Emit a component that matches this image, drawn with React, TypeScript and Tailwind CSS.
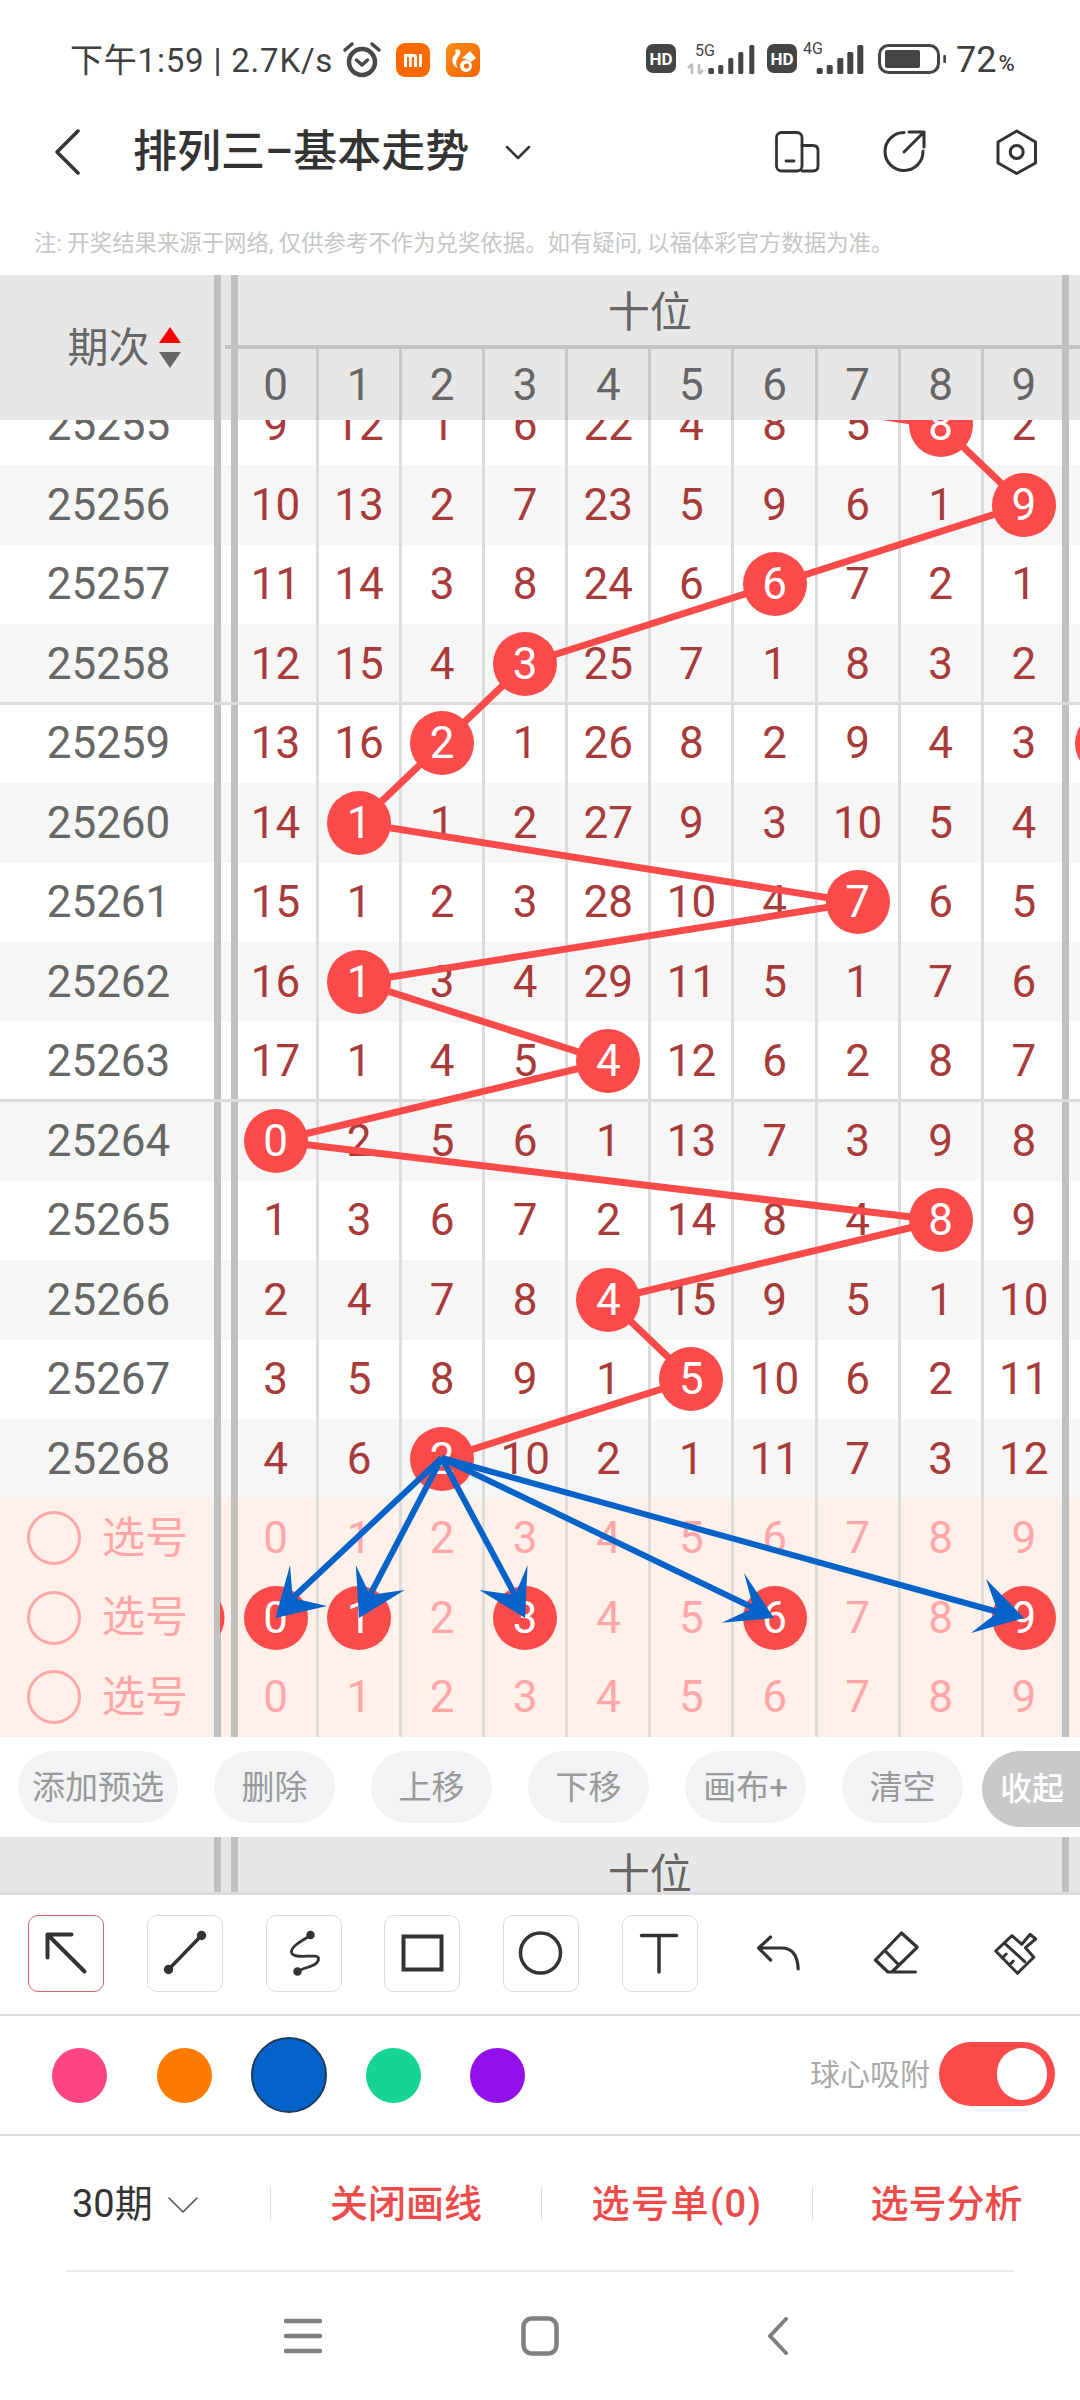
import React from "react";

const COLS = "grid grid-cols-[214px_7px_10px_7px_81px_repeat(8,83.1px)_78px_7px_1fr]";
const DIGITS = [0, 1, 2, 3, 4, 5, 6, 7, 8, 9];
const HEAD_CELLS = [
  "col-start-5 border-r-[3px] border-[#c8c8c8] pr-[3px]",
  "col-start-6 border-r-[3px] border-[#c8c8c8]",
  "col-start-7 border-r-[3px] border-[#c8c8c8]",
  "col-start-8 border-r-[3px] border-[#c8c8c8]",
  "col-start-9 border-r-[3px] border-[#c8c8c8]",
  "col-start-10 border-r-[3px] border-[#c8c8c8]",
  "col-start-11 border-r-[3px] border-[#c8c8c8]",
  "col-start-12 border-r-[3px] border-[#c8c8c8]",
  "col-start-13 border-r-[3px] border-[#c8c8c8]",
  "col-start-14 pl-[2px]",
];

type Cell = number | { b: number };
const b = (n: number) => ({ b: n });

const rows: { id: number; cells: Cell[] }[] = [
  { id: 25255, cells: [9, 12, 1, 6, 22, 4, 8, 5, b(8), 2] },
  { id: 25256, cells: [10, 13, 2, 7, 23, 5, 9, 6, 1, b(9)] },
  { id: 25257, cells: [11, 14, 3, 8, 24, 6, b(6), 7, 2, 1] },
  { id: 25258, cells: [12, 15, 4, b(3), 25, 7, 1, 8, 3, 2] },
  { id: 25259, cells: [13, 16, b(2), 1, 26, 8, 2, 9, 4, 3] },
  { id: 25260, cells: [14, b(1), 1, 2, 27, 9, 3, 10, 5, 4] },
  { id: 25261, cells: [15, 1, 2, 3, 28, 10, 4, b(7), 6, 5] },
  { id: 25262, cells: [16, b(1), 3, 4, 29, 11, 5, 1, 7, 6] },
  { id: 25263, cells: [17, 1, 4, 5, b(4), 12, 6, 2, 8, 7] },
  { id: 25264, cells: [b(0), 2, 5, 6, 1, 13, 7, 3, 9, 8] },
  { id: 25265, cells: [1, 3, 6, 7, 2, 14, 8, 4, b(8), 9] },
  { id: 25266, cells: [2, 4, 7, 8, b(4), 15, 9, 5, 1, 10] },
  { id: 25267, cells: [3, 5, 8, 9, 1, b(5), 10, 6, 2, 11] },
  { id: 25268, cells: [4, 6, b(2), 10, 2, 1, 11, 7, 3, 12] },
];

const cx = (i: number) => (i === 0 ? 275.5 : i === 9 ? 1023.8 : 319 + 83.1 * (i - 1) + 40.05);
const cy = (r: number) => 425.5 + 79.5 * r;

const drawn = [8, 9, 6, 3, 2, 1, 7, 1, 4, 0, 8, 4, 5, 2];

function Ball({ n }: { n: number }) {
  return (
    <span className="relative z-20 flex h-[64px] w-[64px] shrink-0 items-center justify-center rounded-full bg-[#fa4a4a] text-white">
      {n}
    </span>
  );
}

function Cells({ cells, color }: { cells: Cell[]; color: string }) {
  return (
    <>
      {cells.map((c, i) => (
        <div
          key={i}
          className={
            "flex items-center justify-center " +
            color +
            (i === 0 ? " border-r-[3px] border-[#dcdcdc] pr-[3px]" : i === 9 ? " pl-[2px]" : " border-r-[3px] border-[#dcdcdc]")
          }
        >
          {typeof c === "number" ? c : <Ball n={c.b} />}
        </div>
      ))}
    </>
  );
}

function Row({ id, cells, idx }: { id: number; cells: Cell[]; idx: number }) {
  const line = id === 25259 || id === 25264;
  return (
    <div className={COLS + " relative h-[79.5px] text-[44px] leading-none " + (idx % 2 === 1 ? "bg-[#f6f6f6]" : "bg-white")}>
      {line && <div className="absolute inset-x-0 top-[-2px] h-[3px] bg-[#dcdcdc]" />}
      <div className="flex items-center justify-center pl-[3px] text-[#666666]">{id}</div>
      <div className="bg-[#c0c0c0]" />
      <div />
      <div className="bg-[#c0c0c0]" />
      <Cells cells={cells} color="text-[#a83a3a]" />
      <div className="bg-[#c0c0c0]" />
      <div />
    </div>
  );
}

function SelectRow({ cells }: { cells: Cell[] }) {
  return (
    <div className={COLS + " h-[79.5px] bg-[#fff0ea] text-[44px] leading-none"}>
      <div className="flex items-center pl-[27px] text-[#ffa6a6]">
        <span className="h-[54px] w-[54px] rounded-full border-[3.5px] border-[#ffa6a6]" />
        <span className="ml-[21px] text-[43px]">选号</span>
      </div>
      <div className="bg-[#c0c0c0]" />
      <div />
      <div className="bg-[#c0c0c0]" />
      <Cells cells={cells} color="text-[#ffa6a6]" />
      <div className="bg-[#c0c0c0]" />
      <div />
    </div>
  );
}

function Header({ label = true }: { label?: boolean }) {
  return (
    <div className={COLS + " h-[145px] grid-rows-[70px_4px_71px] bg-[#e7e7e7] text-[#666666]"}>
      <div className="col-start-1 row-span-3 row-start-1 flex items-center justify-center pl-[34px] pt-[1px]">
        {label && <span className="text-[41px] leading-none">期次</span>}
        {label && (
          <svg width="22" height="42" viewBox="0 0 22 42" className="ml-[9px]">
            <path d="M11 0 L22 16 H0 Z" fill="#ff0000" />
            <path d="M0 25 H22 L11 41 Z" fill="#666666" />
          </svg>
        )}
      </div>
      <div className="col-start-2 row-span-3 row-start-1 bg-[#c0c0c0]" />
      <div className="col-start-3 row-start-2 ml-[4px] bg-[#c2c2c2]" />
      <div className="col-start-4 row-span-3 row-start-1 bg-[#c0c0c0]" />
      <div className="col-span-10 col-start-5 row-start-1 flex items-center justify-center pt-[5px] text-[42px] leading-none">十位</div>
      <div className="col-span-10 col-start-5 row-start-2 bg-[#c2c2c2]" />
      {DIGITS.map((d) => (
        <div key={d} className={"row-start-3 flex items-center justify-center text-[44px] leading-none " + HEAD_CELLS[d]}>
          {d}
        </div>
      ))}
      <div className="col-start-15 row-span-3 row-start-1 bg-[#c0c0c0]" />
      <div className="col-start-16 row-start-2 bg-[#c2c2c2]" />
    </div>
  );
}

function Arrow({ tip, b1, notch, b2 }: { tip: number[]; b1: number[]; notch: number[]; b2: number[] }) {
  return (
    <g>
      <line x1={441.7} y1={1458} x2={notch[0]} y2={notch[1]} stroke="#0463c9" strokeWidth="6" />
      <polygon points={`${tip[0]},${tip[1]} ${b1[0]},${b1[1]} ${notch[0]},${notch[1]} ${b2[0]},${b2[1]}`} fill="#0463c9" />
    </g>
  );
}

function Overlays() {
  const pts = drawn.map((c, r) => `${cx(c)},${cy(r)}`).join(" ");
  return (
    <>
      <svg width="1080" height="1317" viewBox="0 420 1080 1317" className="absolute left-0 top-0 z-10">
        <defs>
          <clipPath id="lb">
            <rect x="220" y="1560" width="10" height="120" />
          </clipPath>
        </defs>
        <line x1="700" y1="388.5" x2={cx(8)} y2={cy(0)} stroke="#fa4a4a" strokeWidth="7" />
        <polyline points={pts} fill="none" stroke="#fa4a4a" strokeWidth="7" />
        <circle cx="1107" cy={cy(4)} r="32" fill="#fa4a4a" />
        <circle cx="192.5" cy="1618" r="32" fill="#fa4a4a" clipPath="url(#lb)" />
      </svg>
      <svg width="1080" height="1317" viewBox="0 420 1080 1317" className="pointer-events-none absolute left-0 top-0 z-30">
        <Arrow tip={[275.5, 1618]} b1={[290, 1565]} notch={[292.7, 1598]} b2={[327, 1606]} />
        <Arrow tip={[359, 1618]} b1={[355.8, 1565]} notch={[370, 1595]} b2={[404.7, 1590]} />
        <Arrow tip={[525, 1618]} b1={[527.6, 1565]} notch={[515, 1595]} b2={[479.4, 1590]} />
        <Arrow tip={[774, 1618]} b1={[744, 1573]} notch={[753.5, 1608]} b2={[721.5, 1622.7]} />
        <Arrow tip={[1024, 1618]} b1={[986, 1579]} notch={[998, 1612]} b2={[971, 1633]} />
      </svg>
    </>
  );
}

function StatusRight() {
  const bars1 = [
    [708.3, 68, 5.7],
    [718.3, 65, 5],
    [728.3, 58, 5],
    [738.3, 52, 5],
    [749.3, 45, 5],
  ];
  const bars2 = [
    [816.7, 68, 6],
    [826.7, 65, 6],
    [837.3, 58, 6],
    [847.3, 52, 6],
    [857.3, 45, 6],
  ];
  return (
    <svg width="302" height="40" viewBox="646 40 302 40" className="ml-[166px] shrink-0">
      <rect x="646" y="44" width="30" height="29" rx="7" fill="#444444" />
      <text x="661" y="64.5" textAnchor="middle" fontSize="17" fontWeight="700" fill="#fff" fontFamily="Roboto">HD</text>
      <text x="695" y="56" fontSize="16" fill="#444444" fontFamily="Roboto">5G</text>
      <path d="M692 64 V74 M688 68 L692 64 M699 74 V64 M699 74 L703 70" stroke="#bdbdbd" strokeWidth="2.5" fill="none" />
      {bars1.map((a, i) => (
        <rect key={i} x={a[0]} y={a[1]} width={a[2]} height={74 - a[1]} rx="1.5" fill="#444444" />
      ))}
      <rect x="767" y="44" width="30" height="29" rx="7" fill="#444444" />
      <text x="782" y="64.5" textAnchor="middle" fontSize="17" fontWeight="700" fill="#fff" fontFamily="Roboto">HD</text>
      <text x="803" y="54" fontSize="16" fill="#444444" fontFamily="Roboto">4G</text>
      {bars2.map((a, i) => (
        <rect key={i} x={a[0]} y={a[1]} width={a[2]} height={74 - a[1]} rx="1.5" fill="#444444" />
      ))}
      <rect x="879.5" y="45.5" width="59" height="27" rx="9" fill="none" stroke="#444444" strokeWidth="3" />
      <rect x="885" y="50" width="35" height="18" rx="2" fill="#444444" />
      <rect x="943.3" y="55" width="2.7" height="8" rx="1" fill="#444444" />
    </svg>
  );
}

function Tool({ children, active }: { children?: React.ReactNode; active?: boolean }) {
  return (
    <div className={"h-[77px] w-[76px] shrink-0 rounded-[10px] border-[1.5px] " + (active ? "border-[#d96464]" : "border-[#dcdcdc]")}>
      <svg width="73" height="74" viewBox="1.5 1.5 73 74" fill="none" stroke="#333333" strokeWidth="3.5" strokeLinecap="round" strokeLinejoin="round">
        {children}
      </svg>
    </div>
  );
}

function ActionBtn({ label, wide }: { label: string; wide?: boolean }) {
  return (
    <div className={"flex h-[72px] shrink-0 items-center justify-center rounded-full bg-[#f2f3f5] text-[33px] leading-none text-[#999999] " + (wide ? "w-[160px]" : "w-[121px]")}>
      {label}
    </div>
  );
}

export default function App() {
  return (
    <div className="h-[2400px] w-[1080px] overflow-hidden bg-white font-['Roboto','Noto_Sans_CJK_SC',sans-serif]">
      {/* status bar */}
      <div className="flex h-[120px] items-center pl-[70px]">
        <span className="w-[264px] shrink-0 whitespace-nowrap text-[33px] leading-none tracking-[0.8px] text-[#404040]">下午1:59 | 2.7K/s</span>
        <svg width="40" height="38" viewBox="0 0 40 38" className="ml-[8px] shrink-0" fill="none" stroke="#484848" strokeLinecap="round" strokeLinejoin="round">
          <circle cx="20" cy="21" r="13" strokeWidth="4.5" />
          <path d="M14.5 19 L20 24 L25.5 19" strokeWidth="3.5" />
          <path d="M3 9 L10 3 M37 9 L30 3" strokeWidth="3.5" />
        </svg>
        <svg width="34" height="34" viewBox="0 0 34 34" className="ml-[14px] shrink-0">
          <rect width="34" height="34" rx="9" fill="#ff6a00" />
          <path d="M8 11 H18 Q21 11 21 14 V24 H18 V14 H15.8 V24 H13 V14 H11 V24 H8 Z" fill="#fff" />
          <rect x="23" y="11" width="3" height="13" fill="#fff" />
        </svg>
        <svg width="34" height="34" viewBox="0 0 34 34" className="ml-[16px] shrink-0">
          <defs>
            <linearGradient id="uc" x1="0" y1="0" x2="1" y2="1">
              <stop offset="0" stopColor="#ff8a1a" />
              <stop offset="1" stopColor="#f76400" />
            </linearGradient>
          </defs>
          <rect width="34" height="34" rx="8" fill="url(#uc)" />
          <path d="M9 7 C14 5 16 9 13 13 C10 17 9 21 12 25 C8 24 5 19 7 14 C8 12 11 11 9 7 Z" fill="#fff" />
          <path d="M16 15 L24 8 L30 15 L25 19 C22 16 19 16 16 15 Z" fill="#fff" />
          <circle cx="20" cy="23" r="6" fill="#fff" />
          <circle cx="20.5" cy="23" r="2.5" fill="#f76400" />
        </svg>
        <StatusRight />
        <span className="ml-[8px] text-[36px] leading-none text-[#404040]">72</span>
        <span className="ml-[2px] mt-[8px] text-[22px] font-medium leading-none text-[#404040]">%</span>
      </div>

      {/* title bar */}
      <div className="flex h-[64px] items-center pl-[54px] text-[#333333]">
        <svg width="26" height="46" viewBox="0 0 26 46" fill="none" stroke="#333333" strokeWidth="3.5" strokeLinecap="round" strokeLinejoin="round" className="shrink-0">
          <path d="M24 2 L3 23 L24 44" />
        </svg>
        <span className="ml-[53px] w-[332px] shrink-0 whitespace-nowrap text-[44px] font-medium leading-none">排列三–基本走势</span>
        <svg width="26" height="15" viewBox="0 0 26 15" fill="none" stroke="#333333" strokeWidth="2.5" strokeLinecap="round" strokeLinejoin="round" className="ml-[40px] shrink-0">
          <path d="M2 2 L13 13 L24 2" />
        </svg>
        <svg width="48" height="44" viewBox="775 130 48 44" fill="none" stroke="#333333" strokeWidth="2.8" strokeLinecap="round" strokeLinejoin="round" className="ml-[243px] shrink-0">
          <rect x="777.5" y="132.5" width="25.5" height="38.5" rx="5" />
          <path d="M803 145.5 H814 Q819 145.5 819 150.5 V166 Q819 171 814 171 H803" />
          <path d="M787 161 H795" />
        </svg>
        <svg width="46" height="46" viewBox="882 130 46 46" fill="none" stroke="#333333" strokeWidth="3" strokeLinecap="round" strokeLinejoin="round" className="ml-[61px] shrink-0">
          <path d="M903 133.5 A19 19 0 1 0 922 152" />
          <path d="M903 153 L923 133 M908 133 H923 V148" />
        </svg>
        <svg width="44" height="48" viewBox="994 126 44 48" fill="none" stroke="#333333" strokeWidth="3" strokeLinecap="round" strokeLinejoin="round" className="ml-[66px] shrink-0">
          <path d="M1015.7 129 L1034.5 140 V161 L1015.7 171.5 L997 161 V140 Z" />
          <circle cx="1015.7" cy="150" r="6.5" />
        </svg>
      </div>

      {/* note */}
      <div className="flex h-[91px] items-center pl-[34px] pt-[27px] text-[22.4px] leading-none text-[#c6c6c6]">
        <span className="whitespace-nowrap">注: 开奖结果来源于网络, 仅供参考不作为兑奖依据。如有疑问, 以福体彩官方数据为准。</span>
      </div>

      {/* table */}
      <Header />
      <div className="relative h-[1317px] overflow-hidden bg-[#fff0ea]">
        <div className="-mt-[34.5px]">
          {rows.map((r, i) => (
            <Row key={r.id} id={r.id} cells={r.cells} idx={i} />
          ))}
          <SelectRow cells={DIGITS} />
          <SelectRow cells={[b(0), b(1), 2, b(3), 4, 5, b(6), 7, 8, b(9)]} />
          <SelectRow cells={DIGITS} />
        </div>
        <Overlays />
      </div>

      {/* action buttons */}
      <div className="flex h-[100px] items-start overflow-hidden pl-[18px] pt-[14px]">
        <div className="flex gap-[36px]">
          <ActionBtn label="添加预选" wide />
          <ActionBtn label="删除" />
          <ActionBtn label="上移" />
          <ActionBtn label="下移" />
          <ActionBtn label="画布+" />
          <ActionBtn label="清空" />
        </div>
        <div className="ml-[19px] flex h-[76px] w-[130px] shrink-0 items-center rounded-l-full bg-[#c8c8c8] pl-[18px] text-[32px] font-medium leading-none text-white">
          收起
        </div>
      </div>

      {/* next section header, clipped */}
      <div className="h-[55px] overflow-hidden">
        <Header label={false} />
      </div>
      <div className="h-[3px] bg-[#dcdcdc]" />

      {/* drawing tools */}
      <div className="flex h-[119px] gap-[42.7px] pl-[28.4px] pt-[20px]">
        <Tool active>
          <path d="M20 20 H44 M20 20 V43 M20 20 L57 57" strokeWidth="4" />
        </Tool>
        <Tool>
          <path d="M22 55 L55 21" />
          <circle cx="22" cy="55" r="3" fill="#333333" />
          <circle cx="55" cy="21" r="3" fill="#333333" />
        </Tool>
        <Tool>
          <path d="M45 21 C33 28 25 33 26 38 C28 46 53 38 53 44 C53 52 40 52 32 57" strokeWidth="2.8" />
          <circle cx="45" cy="20.5" r="2.5" fill="#333333" />
          <circle cx="32" cy="57" r="2.5" fill="#333333" />
        </Tool>
        <Tool>
          <rect x="20" y="22" width="38" height="33" strokeWidth="4" strokeLinejoin="miter" />
        </Tool>
        <Tool>
          <ellipse cx="38" cy="38.5" rx="20" ry="20" />
        </Tool>
        <Tool>
          <path d="M20 21 H55 M37.5 21 V57.5" />
        </Tool>
        <svg width="76" height="77" viewBox="740.4 1915 76 77" fill="none" stroke="#333333" strokeWidth="3.2" strokeLinecap="round" strokeLinejoin="round" className="shrink-0">
          <path d="M770 1937 L758 1948 L770 1960 M758 1948 H781 C792 1948 797 1955 797.6 1969" />
        </svg>
        <svg width="76" height="77" viewBox="859.1 1915 76 77" fill="none" stroke="#333333" strokeWidth="3.2" strokeLinecap="round" strokeLinejoin="round" className="shrink-0">
          <path d="M901.6 1933 L917.3 1947.3 L892 1972 H888 L875.5 1960 Z M885.3 1951 L898 1964 M888 1972 H915.5" />
        </svg>
        <svg width="76" height="77" viewBox="977.8 1915 76 77" fill="none" stroke="#333333" strokeWidth="3" strokeLinecap="round" strokeLinejoin="round" className="shrink-0">
          <path d="M995.5 1951 L1011.8 1935.7 L1021.6 1944.3 L1030 1934.3 L1035.5 1939 L1025.3 1947.7 L1033.6 1957.3 L1017.3 1973.3 Z M1004.5 1943.3 L1024.5 1961.7 M1002 1958 L1006 1954 M1009 1965 L1013 1961" />
        </svg>
      </div>
      <div className="h-[2px] bg-[#dcdcdc]" />

      {/* colours */}
      <div className="flex h-[118px] items-center pl-[52px]">
        <span className="h-[55px] w-[55px] rounded-full bg-[#ff4581]" />
        <span className="ml-[50px] h-[55px] w-[55px] rounded-full bg-[#ff7a00]" />
        <span className="ml-[39px] h-[76px] w-[76px] rounded-full border-2 border-[#1f3a5f] bg-[#0463c9]" />
        <span className="ml-[39px] h-[55px] w-[55px] rounded-full bg-[#16d492]" />
        <span className="ml-[49px] h-[55px] w-[55px] rounded-full bg-[#9310ea]" />
        <span className="ml-[285px] whitespace-nowrap text-[30px] leading-none text-[#aaaaaa]">球心吸附</span>
        <div className="mb-[2px] ml-[9px] flex h-[64px] w-[116px] items-center justify-end rounded-full bg-[#fa4a4a] pr-[8px]">
          <span className="h-[52px] w-[50px] rounded-full bg-white" />
        </div>
      </div>
      <div className="h-[2px] bg-[#dcdcdc]" />

      {/* bottom bar */}
      <div className="flex h-[134px] items-center">
        <div className="flex w-[270px] items-center pl-[72px] pt-[2px] text-[38px] leading-none text-[#333333]">
          30期
          <svg width="30" height="16" viewBox="0 0 30 16" fill="none" stroke="#555555" strokeWidth="1.6" strokeLinecap="round" strokeLinejoin="round" className="ml-[15px] mt-[2px]">
            <path d="M1 1 L15 15 L29 1" />
          </svg>
        </div>
        <div className="flex h-[33px] w-[271px] items-center justify-center border-l-[1.5px] border-[#dddddd] pt-[2px] text-[38px] font-medium leading-none text-[#ef4a4a]">关闭画线</div>
        <div className="flex h-[33px] w-[271px] items-center justify-center border-l-[1.5px] border-[#dddddd] pt-[2px] text-[38px] font-medium leading-none tracking-[1.5px] text-[#ef4a4a]">选号单(0)</div>
        <div className="flex h-[33px] w-[268px] items-center justify-center border-l-[1.5px] border-[#dddddd] pt-[2px] text-[38px] font-medium leading-none text-[#ef4a4a]">选号分析</div>
      </div>
      <div className="mx-[66px] h-[2px] bg-[#ebebeb]" />

      {/* nav */}
      <div className="flex h-[128px] items-center pl-[284px]">
        <svg width="38" height="36" viewBox="0 0 38 36" fill="none" stroke="#808080" strokeWidth="4.5" strokeLinecap="round">
          <path d="M2 3 H36 M2 18 H36 M2 33 H36" />
        </svg>
        <svg width="38" height="40" viewBox="0 0 38 40" fill="none" stroke="#808080" strokeWidth="4.5" className="ml-[199px]">
          <rect x="2.5" y="2.5" width="33" height="35" rx="8" />
        </svg>
        <svg width="20" height="38" viewBox="0 0 20 38" fill="none" stroke="#808080" strokeWidth="4" strokeLinecap="round" strokeLinejoin="round" className="ml-[209px]">
          <path d="M18 2 L2 19 L18 36" />
        </svg>
      </div>
    </div>
  );
}
